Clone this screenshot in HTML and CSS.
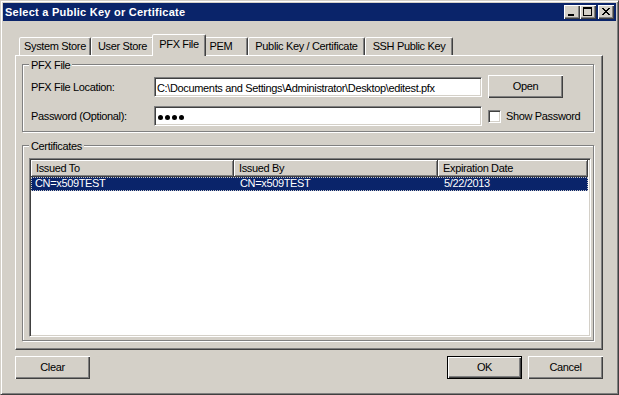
FILE: index.html
```html
<!DOCTYPE html>
<html>
<head>
<meta charset="utf-8">
<link rel="stylesheet" href="styles.css">
</head>
<body>
<div class="window">
  <div class="titlebar">
    <span class="title">Select a Public Key or Certificate</span>
    <div class="caption-buttons">
      <span class="cbtn"><svg width="16" height="14" viewBox="0 0 16 14"><path d="M4 9h6v2H4z" fill="#000"/></svg></span>
      <span class="cbtn"><svg width="16" height="14" viewBox="0 0 16 14"><path d="M3 2h9v9H3zM4 4v6h7V4z" fill="#000" fill-rule="evenodd"/></svg></span>
      <span class="cbtn close"><svg width="16" height="14" viewBox="0 0 16 14"><path d="M4 3h2v1H4zM10 3h2v1h-2zM5 4h2v1H5zM9 4h2v1H9zM6 5h4v1H6zM7 6h2v1H7zM6 7h4v1H6zM5 8h2v1H5zM9 8h2v1H9zM4 9h2v1H4zM10 9h2v1h-2z" fill="#000"/></svg></span>
    </div>
  </div>
  <div class="body">
    <div class="tabs">
      <div class="tab t-ss">System Store</div>
      <div class="tab t-us">User Store</div>
      <div class="tab t-pfx active">PFX File</div>
      <div class="tab t-pem">PEM</div>
      <div class="tab t-pk">Public Key / Certificate</div>
      <div class="tab t-ssh">SSH Public Key</div>
    </div>
    <div class="panel">
      <div class="group group-pfx">
        <div class="group-title">PFX File</div>
        <div class="form-grid">
          <div class="label">PFX File Location:</div>
          <div class="field">C:\Documents and Settings\Administrator\Desktop\editest.pfx</div>
          <div class="button">Open</div>
          <div class="label">Password (Optional):</div>
          <div class="field"><span class="dots"><span class="dot"></span><span class="dot"></span><span class="dot"></span><span class="dot"></span></span></div>
          <div class="check"><span class="checkbox"></span><span>Show Password</span></div>
        </div>
      </div>
      <div class="group group-certs">
        <div class="group-title">Certificates</div>
        <div class="list">
          <div class="list-header">
            <div class="hcell c1">Issued To</div>
            <div class="hcell c2">Issued By</div>
            <div class="hcell c3">Expiration Date</div>
          </div>
          <div class="list-row selected">
            <div class="cell c1 first">CN=x509TEST</div>
            <div class="cell c2">CN=x509TEST</div>
            <div class="cell c3">5/22/2013</div>
          </div>
        </div>
      </div>
    </div>
    <div class="buttons">
      <div class="button">Clear</div>
      <div class="spacer"></div>
      <div class="button default">OK</div>
      <div class="button cancel">Cancel</div>
    </div>
  </div>
</div>
</body>
</html>
```

FILE: styles.css
```css
html, body {
  margin: 0;
  padding: 0;
  background: #d4d0c8;
}

.window {
  width: 619px;
  height: 395px;
  box-sizing: border-box;
  border: 1px solid;
  border-color: #d4d0c8 #404040 #404040 #d4d0c8;
  box-shadow: inset 1px 1px #fff, inset -1px -1px #808080;
  padding: 2px;
  background: #d4d0c8;
  display: flex;
  flex-direction: column;
  font-family: "Liberation Sans", Arial, sans-serif;
  font-size: 11px;
  letter-spacing: -0.35px;
  color: #000;
}

.titlebar {
  height: 18px;
  flex: none;
  background: #0a246a;
  display: flex;
  align-items: center;
  padding: 0 2px;
  color: #fff;
}

.title {
  flex: 1;
  font-weight: bold;
  letter-spacing: 0.25px;
  line-height: 13px;
}

.caption-buttons {
  display: flex;
}

.cbtn {
  width: 16px;
  height: 14px;
  background: #d4d0c8;
  box-shadow: inset 1px 1px #fff, inset -1px -1px #404040, inset -2px -2px #808080;
}

.cbtn svg {
  display: block;
}

.cbtn.close {
  margin-left: 2px;
}

.body {
  flex: 1;
  padding: 13px 13px 0 12px;
  display: flex;
  flex-direction: column;
}

.tabs {
  display: flex;
  align-items: flex-end;
  height: 21px;
  flex: none;
  padding-left: 4px;
}

.tab {
  box-sizing: border-box;
  height: 18px;
  border: 1px solid;
  border-bottom: none;
  border-color: #fff #404040 transparent #fff;
  box-shadow: inset -1px 0 #808080;
  border-radius: 2px 2px 0 0;
  padding-top: 1px;
  line-height: 15px;
  text-align: center;
  white-space: nowrap;
  background: #d4d0c8;
}

.t-ss { width: 72px; }
.t-us { width: 63px; }
.t-pfx { width: 50px; }
.t-pem { width: 44px; padding-right: 10px; }
.t-pk { width: 117px; }
.t-ssh { width: 88px; }

.tab.active {
  width: 54px;
  height: 22px;
  margin: 0 -2px -1px;
  padding-top: 2px;
  position: relative;
  z-index: 1;
}

.panel {
  flex: none;
  height: 295px;
  box-sizing: border-box;
  border: 1px solid;
  border-color: #fff #404040 #404040 #fff;
  box-shadow: inset -1px -1px #808080;
  padding: 8px 8px 8px 6px;
  display: flex;
  flex-direction: column;
}

.group {
  position: relative;
  box-sizing: border-box;
  border: 1px solid #808080;
  box-shadow: inset 1px 1px #fff, 1px 1px 0 #fff;
}

.group-title {
  position: absolute;
  top: -6px;
  left: 6px;
  padding: 0 2px;
  line-height: 13px;
  background: #d4d0c8;
}

.group-pfx {
  height: 68px;
  flex: none;
  padding: 10px 0 0 8px;
}

.form-grid {
  display: grid;
  grid-template-columns: 117px 328px 75px;
  grid-template-rows: 23px 23px;
  column-gap: 6px;
  row-gap: 6px;
}

.label {
  line-height: 13px;
  margin-top: 6px;
  white-space: nowrap;
}

.field {
  box-sizing: border-box;
  height: 20px;
  margin-top: 2px;
  background: #fff;
  border: 1px solid;
  border-color: #808080 #fff #fff #808080;
  box-shadow: inset 1px 1px #404040, inset -1px -1px #d4d0c8;
  padding: 2px 2px 0;
  line-height: 16px;
  white-space: nowrap;
  overflow: hidden;
}

.dots {
  display: flex;
  gap: 2px;
  padding-top: 6px;
  padding-left: 1px;
}

.dot {
  width: 5px;
  height: 5px;
  border-radius: 50%;
  background: #000;
}

.button {
  box-sizing: border-box;
  width: 75px;
  height: 23px;
  line-height: 23px;
  text-align: center;
  background: #d4d0c8;
  box-shadow: inset 1px 1px #fff, inset -1px -1px #404040, inset -2px -2px #808080;
}

.button.default {
  border: 1px solid #000;
  line-height: 21px;
}

.check {
  display: flex;
  align-items: center;
  gap: 5px;
  margin-top: 6px;
  align-self: start;
  line-height: 13px;
  white-space: nowrap;
}

.checkbox {
  flex: none;
  box-sizing: border-box;
  width: 13px;
  height: 13px;
  background: #fff;
  border: 1px solid;
  border-color: #808080 #fff #fff #808080;
  box-shadow: inset 1px 1px #404040, inset -1px -1px #d4d0c8;
}

.group-certs {
  flex: 1;
  margin-top: 13px;
  padding: 12px 2px 3px 6px;
  display: flex;
  flex-direction: column;
}

.list {
  flex: 1;
  box-sizing: border-box;
  background: #fff;
  border: 1px solid;
  border-color: #808080 #fff #fff #808080;
  box-shadow: inset 1px 1px #404040, inset -1px -1px #d4d0c8;
  padding: 1px;
}

.list-header {
  display: flex;
}

.hcell {
  box-sizing: border-box;
  height: 17px;
  background: #d4d0c8;
  border-right: 1px solid #404040;
  border-bottom: 1px solid #404040;
  box-shadow: inset 1px 1px #fff, inset -1px -1px #808080;
  padding: 2px 0 0 5px;
  line-height: 13px;
  white-space: nowrap;
}

.c1 { width: 203px; }
.c2 { width: 204px; }
.c3 { width: 150px; }

.list-row {
  display: flex;
  width: 557px;
  height: 14px;
  line-height: 13px;
}

.list-row.selected {
  background: #0a246a;
  color: #fff;
  outline: 1px dotted #c8c8c8;
  outline-offset: -1px;
}

.cell {
  box-sizing: border-box;
  padding-left: 6px;
  white-space: nowrap;
}

.cell.first {
  padding-left: 4px;
}

.buttons {
  display: flex;
  margin-top: 6px;
  flex: none;
}

.spacer {
  flex: 1;
}

.button.cancel {
  margin-left: 6px;
}
```
